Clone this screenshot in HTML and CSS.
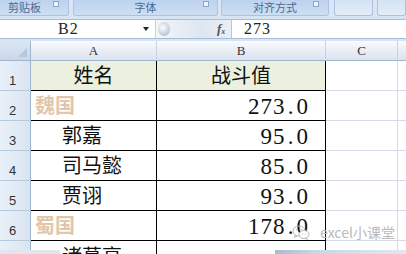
FILE: index.html
```html
<!DOCTYPE html>
<html>
<head>
<meta charset="utf-8">
<link rel="stylesheet" href="styles.css">
</head>
<body>
<div class="app">
  <div class="ribbon">
    <div class="group g1"><span class="glabel">剪贴板</span><span class="launch"></span></div>
    <div class="group g2"><span class="glabel">字体</span><span class="launch"></span></div>
    <div class="group g3"><span class="glabel">对齐方式</span><span class="launch"></span></div>
    <div class="group g4"></div>
    <div class="group g5"></div>
  </div>
  <div class="formula">
    <div class="namebox"><span class="nametext">B2</span><span class="arrow"></span></div>
    <div class="fxarea"><span class="knob"></span><span class="fx">f<sub>x</sub></span></div>
    <div class="finput">273</div>
  </div>
  <div class="sheet">
    <div class="corner"><span class="tri"></span></div>
    <div class="colh">A</div>
    <div class="colh">B</div>
    <div class="colh">C</div>
    <div class="colh last"></div>

    <div class="rowh">1</div>
    <div class="cell a hdr center">姓名</div>
    <div class="cell b hdr center">战斗值</div>
    <div class="cell c"></div>
    <div class="cell d"></div>

    <div class="rowh">2</div>
    <div class="cell a group-name">魏国</div>
    <div class="cell b num">273<span class="dot">.</span>0</div>
    <div class="cell c"></div>
    <div class="cell d"></div>

    <div class="rowh">3</div>
    <div class="cell a person">郭嘉</div>
    <div class="cell b num">95<span class="dot">.</span>0</div>
    <div class="cell c"></div>
    <div class="cell d"></div>

    <div class="rowh">4</div>
    <div class="cell a person">司马懿</div>
    <div class="cell b num">85<span class="dot">.</span>0</div>
    <div class="cell c"></div>
    <div class="cell d"></div>

    <div class="rowh">5</div>
    <div class="cell a person">贾诩</div>
    <div class="cell b num">93<span class="dot">.</span>0</div>
    <div class="cell c"></div>
    <div class="cell d"></div>

    <div class="rowh">6</div>
    <div class="cell a group-name">蜀国</div>
    <div class="cell b num">178<span class="dot">.</span>0</div>
    <div class="cell c"></div>
    <div class="cell d"></div>

    <div class="rowh">7</div>
    <div class="cell a person row7">诸葛亮</div>
    <div class="cell b num"></div>
    <div class="cell c"></div>
    <div class="cell d"></div>
  </div>
  <div class="bottombar">
    <span class="bb1"></span><span class="bb2"></span><span class="bb3"></span>
  </div>
  <div class="watermark">
    <svg class="wechat" width="18" height="15" viewBox="0 0 18 15">
      <ellipse cx="7" cy="6" rx="6" ry="5" fill="none" stroke="#b8b8b8" stroke-width="1"/>
      <path d="M3.5 10 L2.5 12.5 L5.5 10.8" fill="none" stroke="#b8b8b8" stroke-width="1"/>
      <ellipse cx="12" cy="9.5" rx="5" ry="4" fill="#fff" stroke="#b8b8b8" stroke-width="1"/>
      <path d="M14.5 13 L15.5 14.5 L13 13.3" fill="none" stroke="#b8b8b8" stroke-width="1"/>
      <circle cx="5" cy="4.5" r="0.8" fill="#b8b8b8"/>
      <circle cx="9" cy="4.5" r="0.8" fill="#b8b8b8"/>
      <circle cx="10.5" cy="9" r="0.6" fill="#b8b8b8"/>
      <circle cx="13.5" cy="9" r="0.6" fill="#b8b8b8"/>
    </svg>
    <span class="wmtext">excel小课堂</span>
  </div>
</div>
</body>
</html>
```

FILE: styles.css
```css
html, body {
  margin: 0;
  padding: 0;
  background: #fff;
}
.app {
  position: relative;
  width: 406px;
  height: 254px;
  overflow: hidden;
  background: #d7e4f3;
  font-family: "Noto Sans CJK SC", "Liberation Sans", sans-serif;
}
.ribbon {
  height: 16px;
  display: flex;
  background: #dbe6f4;
}
.group {
  position: relative;
  height: 16px;
  background: linear-gradient(#bcd2ee, #cfdff3);
  border: 1px solid #aac3e3;
  border-top: none;
  border-radius: 0 0 3px 3px;
  box-sizing: border-box;
  display: flex;
  align-items: flex-start;
  justify-content: center;
}
.g1 { width: 72px; margin-left: -1px; justify-content: flex-start; padding-left: 8px; }
.g2 { width: 150px; margin-left: 4px; }
.g3 { width: 112px; margin-left: 3px; }
.g4 { width: 40px; margin-left: 5px; background: linear-gradient(#d5e3f4, #e4edf8); }
.g5 { width: 30px; margin-left: 4px; background: linear-gradient(#d5e3f4, #e4edf8); }
.glabel {
  display: block;
  font-size: 11px;
  line-height: 15px;
  color: #4a6a94;
}
.launch {
  position: absolute;
  right: 9px;
  top: 1px;
  width: 4px;
  height: 4px;
  border: 1px solid #8aa6c8;
  background: #eef4fb;
}
.g2 .launch { right: 8px; }
.formula {
  margin-top: 3px;
  height: 20px;
  display: flex;
  background: #fff;
  border-top: 1px solid #a7bcd6;
  border-bottom: 1px solid #a7bcd6;
  box-sizing: border-box;
}
.namebox {
  width: 155px;
  position: relative;
}
.nametext {
  position: absolute;
  left: 58px;
  top: 0;
  font-family: "Liberation Serif", serif;
  font-size: 16px;
  line-height: 18px;
  color: #222;
  letter-spacing: 1px;
}
.arrow {
  position: absolute;
  left: 143px;
  top: 7px;
  width: 0;
  height: 0;
  border-left: 3.5px solid transparent;
  border-right: 3.5px solid transparent;
  border-top: 4px solid #222;
}
.fxarea {
  width: 77px;
  position: relative;
  background: linear-gradient(90deg, #f3f6fa, #dde6f1 60%, #e9eff6);
  border-left: 1px solid #c3d1e3;
  border-right: 1px solid #b5c7dd;
  box-sizing: border-box;
}
.knob {
  position: absolute;
  left: 2px;
  top: 2px;
  width: 12px;
  height: 14px;
  border-radius: 50%;
  background: radial-gradient(circle at 40% 40%, #ffffff, #c8d0da 60%, #9aa8b8);
}
.fx {
  position: absolute;
  left: 61px;
  top: 1px;
  font-family: "Liberation Serif", serif;
  font-style: italic;
  font-weight: bold;
  font-size: 13px;
  color: #555;
}
.fx sub {
  font-size: 8px;
  vertical-align: -1px;
}
.finput {
  flex: 1;
  padding-left: 12px;
  font-family: "Liberation Serif", serif;
  font-size: 16px;
  line-height: 18px;
  color: #222;
  letter-spacing: 1px;
}
.sheet {
  margin-top: 2px;
  display: grid;
  grid-template-columns: 31px 126px 169px 72px 8px;
  grid-template-rows: 20px repeat(7, 30px);
  background: #fff;
}
.corner {
  position: relative;
  background: linear-gradient(#dde7f3, #c9d7e9);
  border-right: 1px solid #9eb6ce;
  border-bottom: 1px solid #9eb6ce;
  box-sizing: border-box;
}
.tri {
  position: absolute;
  right: 3px;
  bottom: 3px;
  width: 0;
  height: 0;
  border-left: 9px solid transparent;
  border-bottom: 9px solid #b7c8dd;
}
.colh {
  background: linear-gradient(#f9fbfd, #e9eef5 50%, #dbe3ee);
  border-right: 1px solid #c5d2e2;
  border-bottom: 1px solid #9eb6ce;
  box-sizing: border-box;
  text-align: center;
  font-family: "Liberation Serif", serif;
  font-size: 13px;
  line-height: 20px;
  color: #333;
}
.colh.last { border-right: none; }
.rowh {
  background: linear-gradient(90deg, #e9f0f8, #dae4f1);
  border-right: 1px solid #9eb6ce;
  border-bottom: 1px solid #b6c8dc;
  box-sizing: border-box;
  font-family: "Liberation Sans", sans-serif;
  font-size: 13px;
  color: #333;
  display: flex;
  align-items: flex-end;
  padding-left: 9px;
  padding-bottom: 2px;
}
.cell {
  box-sizing: border-box;
  border-bottom: 1px solid #d4dbe6;
  border-right: 1px solid #d4dbe6;
  font-size: 20px;
  color: #111;
  display: flex;
  align-items: flex-end;
  padding-bottom: 1px;
  white-space: nowrap;
  overflow: visible;
}
.cell.a, .cell.b {
  border-bottom: 1px solid #000;
  border-right: 1px solid #000;
}
.cell.d { border-right: none; }
.hdr { background: #ebf1de; }
.center { justify-content: center; }
.group-name {
  color: #e2c6aa;
  padding-left: 4px;
  font-weight: bold;
}
.person { padding-left: 31px; }
.row7 { align-items: flex-start; padding-top: 0; }
.num {
  justify-content: flex-end;
  padding-right: 16px;
  font-family: "Liberation Serif", serif;
  font-size: 23px;
  letter-spacing: 1px;
  padding-bottom: 0;
}
.dot {
  display: inline-block;
  width: 11px;
  text-align: center;
}
.bottombar {
  position: absolute;
  left: 0;
  top: 250px;
  width: 406px;
  height: 4px;
  display: flex;
}
.bb1 { width: 60px; background: #dfe6ee; }
.bb2 { width: 215px; background: transparent; }
.bb3 { flex: 1; background: linear-gradient(90deg, #a9bbd3, #c9d6e6 30%, #e2e8f0); }
.watermark {
  position: absolute;
  left: 292px;
  top: 224px;
  display: flex;
  align-items: center;
  gap: 10px;
}
.wmtext {
  font-family: "Noto Sans CJK SC", "Liberation Sans", sans-serif;
  font-size: 14px;
  color: #b9b9b9;
  line-height: 16px;
}
```
